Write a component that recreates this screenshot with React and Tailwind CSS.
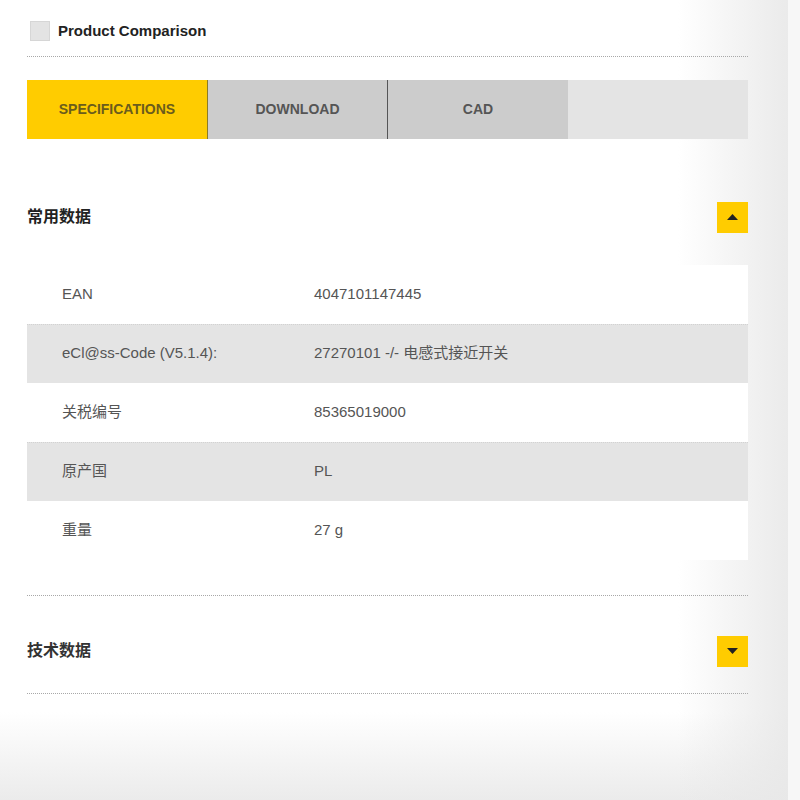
import React from "react";

const font = { fontFamily: '"Liberation Sans", Arial, "Noto Sans CJK SC", sans-serif' };

const rows = [
  { label: "EAN", value: "4047101147445" },
  { label: "eCl@ss-Code (V5.1.4):", value: "27270101 -/- 电感式接近开关" },
  { label: "关税编号", value: "85365019000" },
  { label: "原产国", value: "PL" },
  { label: "重量", value: "27 g" },
];

function Toggle({ open }) {
  return (
    <button className="w-[31px] h-[31px] bg-[#ffcc00] flex items-center justify-center">
      <svg width="11" height="6" viewBox="0 0 11 6">
        {open ? (
          <polygon points="0,6 11,6 5.5,0" fill="#222" />
        ) : (
          <polygon points="0,0 11,0 5.5,6" fill="#222" />
        )}
      </svg>
    </button>
  );
}

export default function App() {
  return (
    <div style={font} className="w-[800px] h-[800px] flex bg-[#f7f7f7] overflow-hidden">
      <main className="w-[788px] h-full bg-[linear-gradient(to_right,rgba(255,255,255,0)_86%,rgba(232,232,232,0.9)),linear-gradient(to_bottom,#ffffff_89%,#ebebeb)]">
        <div className="ml-[27px] w-[721px]">
          {/* compare checkbox */}
          <div className="pt-[20px] pb-[13px] flex items-center gap-2 border-b border-dotted border-[#a8a8a8]">
            <span className="w-[20px] h-[20px] bg-[#e3e3e3] border border-[#d6d6d6] ml-[3px]" />
            <span className="text-[15px] font-bold text-[#222]">Product Comparison</span>
          </div>

          {/* tabs */}
          <div className="mt-[23px] h-[59px] flex text-[14px] font-bold uppercase">
            <div className="w-[180px] bg-[#ffcc00] text-[#6b5c1c] flex items-center justify-center">
              Specifications
            </div>
            <div className="w-[180px] bg-[#cccccc] text-[#555] border-l border-[#8a7a2a] flex items-center justify-center">
              Download
            </div>
            <div className="w-[181px] bg-[#cccccc] text-[#555] border-l border-[#555] flex items-center justify-center">
              CAD
            </div>
            <div className="flex-1 bg-[#e4e4e4]" />
          </div>

          {/* general data */}
          <div className="mt-[63px] h-[31px] flex items-center justify-between">
            <h3 className="text-[16px] font-bold text-[#222]">常用数据</h3>
            <Toggle open />
          </div>

          <div className="mt-[32px]">
            {rows.map((r, i) => (
              <div
                key={r.label}
                className={
                  i % 2 === 1
                    ? "h-[59px] flex items-center text-[15px] text-[#555] bg-[#e4e4e4] border-t border-dotted border-[#d2d2d2]"
                    : "h-[59px] flex items-center text-[15px] text-[#555] bg-white"
                }
              >
                <span className="pl-[35px] w-[287px]">{r.label}</span>
                <span>{r.value}</span>
              </div>
            ))}
          </div>

          <div className="mt-[35px] border-t border-dotted border-[#a8a8a8]" />

          {/* technical data */}
          <div className="mt-[40px] h-[31px] flex items-center justify-between">
            <h3 className="text-[16px] font-bold text-[#333]">技术数据</h3>
            <Toggle open={false} />
          </div>

          <div className="mt-[26px] border-t border-dotted border-[#a8a8a8]" />
        </div>
      </main>
    </div>
  );
}
